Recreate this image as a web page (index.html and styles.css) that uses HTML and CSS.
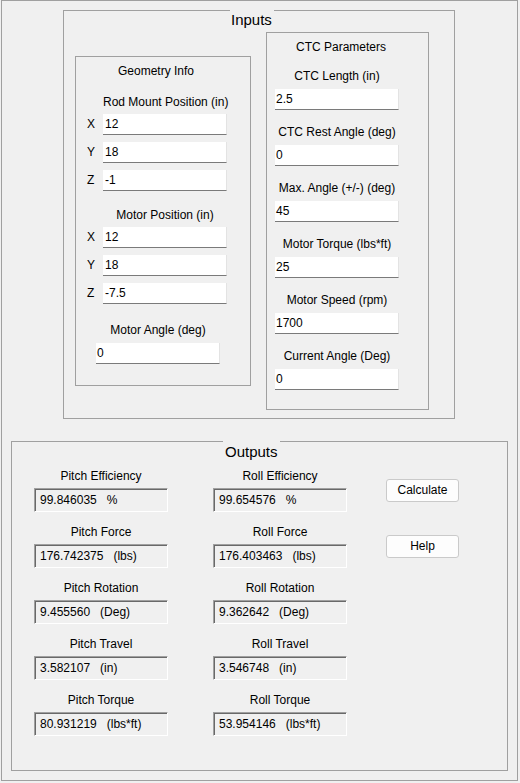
FILE: index.html
```html
<!DOCTYPE html>
<html>
<head>
<meta charset="utf-8">
<link rel="stylesheet" href="styles.css">
</head>
<body>
<div class="window">
  <div class="group inputs">
    <span class="group-title inputs-title">Inputs</span>
    <div class="inputs-row">
      <div class="subgroup geometry">
        <div class="sub-title geo-title">Geometry Info</div>

        <div class="pos-section rod">
          <div class="pos-header">Rod Mount Position (in)</div>
          <div class="pos-row"><span class="axis">X</span><div class="field">12</div></div>
          <div class="pos-row"><span class="axis">Y</span><div class="field">18</div></div>
          <div class="pos-row"><span class="axis">Z</span><div class="field">-1</div></div>
        </div>

        <div class="pos-section motor">
          <div class="pos-header">Motor Position (in)</div>
          <div class="pos-row"><span class="axis">X</span><div class="field">12</div></div>
          <div class="pos-row"><span class="axis">Y</span><div class="field">18</div></div>
          <div class="pos-row"><span class="axis">Z</span><div class="field">-7.5</div></div>
        </div>

        <div class="angle-section">
          <div class="angle-header">Motor Angle (deg)</div>
          <div class="field angle-field">0</div>
        </div>
      </div>

      <div class="subgroup ctc">
        <div class="sub-title ctc-title">CTC Parameters</div>
        <div class="ctc-list">
          <div class="ctc-item"><div class="ctc-label">CTC Length (in)</div><div class="field">2.5</div></div>
          <div class="ctc-item"><div class="ctc-label">CTC Rest Angle (deg)</div><div class="field">0</div></div>
          <div class="ctc-item"><div class="ctc-label">Max. Angle (+/-) (deg)</div><div class="field">45</div></div>
          <div class="ctc-item"><div class="ctc-label">Motor Torque (lbs*ft)</div><div class="field">25</div></div>
          <div class="ctc-item"><div class="ctc-label">Motor Speed (rpm)</div><div class="field">1700</div></div>
          <div class="ctc-item"><div class="ctc-label">Current Angle (Deg)</div><div class="field">0</div></div>
        </div>
      </div>
    </div>
  </div>

  <div class="group outputs">
    <span class="group-title outputs-title">Outputs</span>
    <div class="out-grid">
      <div class="out-col">
        <div class="out-item"><div class="out-label">Pitch Efficiency</div><div class="out-field">99.846035   %</div></div>
        <div class="out-item"><div class="out-label">Pitch Force</div><div class="out-field">176.742375   (lbs)</div></div>
        <div class="out-item"><div class="out-label">Pitch Rotation</div><div class="out-field">9.455560   (Deg)</div></div>
        <div class="out-item"><div class="out-label">Pitch Travel</div><div class="out-field">3.582107   (in)</div></div>
        <div class="out-item"><div class="out-label">Pitch Torque</div><div class="out-field">80.931219   (lbs*ft)</div></div>
      </div>
      <div class="out-col">
        <div class="out-item"><div class="out-label">Roll Efficiency</div><div class="out-field">99.654576   %</div></div>
        <div class="out-item"><div class="out-label">Roll Force</div><div class="out-field">176.403463   (lbs)</div></div>
        <div class="out-item"><div class="out-label">Roll Rotation</div><div class="out-field">9.362642   (Deg)</div></div>
        <div class="out-item"><div class="out-label">Roll Travel</div><div class="out-field">3.546748   (in)</div></div>
        <div class="out-item"><div class="out-label">Roll Torque</div><div class="out-field">53.954146   (lbs*ft)</div></div>
      </div>
      <div class="btn-col">
        <button class="btn">Calculate</button>
        <button class="btn">Help</button>
      </div>
    </div>
  </div>
</div>
</body>
</html>
```

FILE: styles.css
```css
html, body {
  margin: 0;
  padding: 0;
  background: #f0f0f0;
}

body {
  font-family: "Liberation Sans", Arial, sans-serif;
  font-size: 12px;
  color: #000;
  width: 520px;
  height: 783px;
  overflow: hidden;
}

.window {
  box-sizing: border-box;
  margin-left: 1px;
  width: 517px;
  height: 781px;
  border: 1px solid #a0a0a0;
  display: flex;
  flex-direction: column;
  align-items: flex-start;
}

.group {
  position: relative;
  box-sizing: border-box;
  border: 1px solid #a0a0a0;
}

.group-title {
  position: absolute;
  top: -1px;
  font-size: 15px;
  background: #f0f0f0;
  white-space: nowrap;
}

.inputs {
  margin-top: 9px;
  margin-left: 61px;
  width: 392px;
  height: 409px;
}

.inputs-title {
  left: 166px;
  line-height: 20px;
  padding: 0 2px 0 1px;
}

.inputs-row {
  display: flex;
  align-items: flex-start;
  padding-left: 11px;
}

.subgroup {
  box-sizing: border-box;
  border: 1px solid #a0a0a0;
}

.sub-title {
  line-height: 16px;
  text-align: center;
  margin-top: 6px;
}

.geometry {
  width: 176px;
  height: 330px;
  margin-top: 45px;
}

.geo-title {
  padding-right: 14px;
}

.pos-section {
  padding-left: 11px;
  display: flex;
  flex-direction: column;
  gap: 7px;
}

.rod {
  margin-top: 15px;
}

.motor {
  margin-top: 16px;
}

.pos-header {
  margin-left: 16px;
  width: 124px;
  text-align: center;
  line-height: 16px;
  white-space: nowrap;
  margin-bottom: -3px;
}

.pos-row {
  display: flex;
  align-items: center;
}

.axis {
  width: 16px;
  line-height: 21px;
}

.field {
  box-sizing: border-box;
  width: 124px;
  height: 21px;
  background: #fff;
  border-bottom: 1px solid #7a7a7a;
  border-right: 1px solid #e3e3e3;
  padding-left: 2px;
  line-height: 21px;
}

.angle-section {
  margin-top: 18px;
  padding-left: 20px;
  width: 124px;
}

.angle-header {
  text-align: center;
  line-height: 16px;
  margin-bottom: 5px;
  white-space: nowrap;
}

.angle-field {
  padding-left: 1px;
}

.ctc {
  width: 163px;
  height: 378px;
  margin-top: 21px;
  margin-left: 15px;
}

.ctc-title {
  padding-right: 13px;
}

.ctc-list {
  padding-left: 8px;
  margin-top: 13px;
  display: flex;
  flex-direction: column;
  gap: 14px;
}

.ctc-item {
  width: 124px;
}

.ctc-item .field {
  padding-left: 1px;
}

.ctc-label {
  text-align: center;
  line-height: 16px;
  margin-bottom: 5px;
  white-space: nowrap;
}

.outputs {
  margin-top: 22px;
  margin-left: 9px;
  width: 497px;
  height: 330px;
}

.outputs-title {
  left: 211px;
  line-height: 22px;
  padding: 0 2px 0 2px;
}

.out-grid {
  display: flex;
  align-items: flex-start;
  padding-left: 22px;
  padding-top: 26px;
}

.out-col {
  width: 134px;
  display: flex;
  flex-direction: column;
  gap: 12px;
  margin-right: 45px;
}

.out-col + .out-col {
  margin-right: 39px;
}

.out-label {
  text-align: center;
  line-height: 16px;
  margin-bottom: 4px;
  white-space: nowrap;
}

.out-field {
  box-sizing: border-box;
  height: 24px;
  border-top: 1px solid #a0a0a0;
  border-left: 1px solid #a0a0a0;
  border-bottom: 1px solid #ffffff;
  border-right: 1px solid #ffffff;
  box-shadow: inset 1px 1px 0 #696969;
  padding-left: 5px;
  line-height: 22px;
  white-space: pre;
}

.btn-col {
  display: flex;
  flex-direction: column;
  gap: 33px;
  margin-top: 11px;
}

.btn {
  box-sizing: border-box;
  width: 73px;
  height: 23px;
  margin: 0;
  padding: 0;
  background: #fdfdfd;
  border: 1px solid #cacaca;
  border-radius: 3px;
  font-family: "Liberation Sans", Arial, sans-serif;
  font-size: 12px;
  color: #000;
  line-height: 21px;
}
```
